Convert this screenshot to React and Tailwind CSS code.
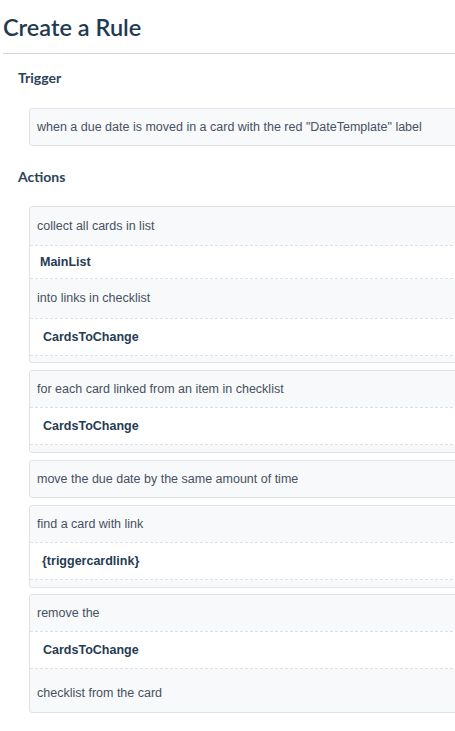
import React from "react";

const Text = ({ children, h = "h-[36px]", extra = "" }) => (
  <div className={`${h} flex items-center pl-[7px] text-[12.5px] text-[#465161] font-['Liberation_Sans',Arial,sans-serif] ${extra}`}>
    {children}
  </div>
);

const Value = ({ children, h = "h-[36px]", pl = "pl-[13px]" }) => (
  <div className={`${h} flex items-center ${pl} bg-white border-y border-dashed border-[#dde0e4] text-[12.5px] font-bold text-[#263c52] font-['Liberation_Sans',Arial,sans-serif]`}>
    {children}
  </div>
);

const Box = ({ children, className = "" }) => (
  <div className={`w-[450px] bg-[#f8f9fb] border border-[#dfe1e6] rounded-[3px] ${className}`}>
    {children}
  </div>
);

export default function App() {
  return (
    <div className="w-[455px] h-[731px] overflow-hidden bg-white font-['Lato',sans-serif]">
      <div className="ml-[3px] pt-[13px] pb-[11px] border-b border-[#d4d6d9]">
        <h1 className="text-[23.5px] leading-[29px] font-semibold text-[#1f3b53]">
          Create a Rule
        </h1>
      </div>
      <div className="pl-[18px] mt-[15px] text-[14px] leading-[17px] font-bold text-[#2d4358]">Trigger</div>
      <div className="pl-[29px] mt-[22px]">
        <Box>
          <Text h="h-[36px]">when a due date is moved in a card with the red "DateTemplate" label</Text>
        </Box>
      </div>
      <div className="pl-[18px] mt-[22px] text-[14px] leading-[17px] font-bold text-[#2d4358]">Actions</div>
      <div className="pl-[29px] mt-[21px] flex flex-col">
        <Box className="pb-[6px]">
          <Text h="h-[38px]">collect all cards in list</Text>
          <Value h="h-[34px]" pl="pl-[10px]">MainList</Value>
          <Text h="h-[39px]">into links in checklist</Text>
          <Value h="h-[38px]">CardsToChange</Value>
        </Box>
        <Box className="pb-[7px] mt-[7px]">
          <Text>for each card linked from an item in checklist</Text>
          <Value h="h-[38px]">CardsToChange</Value>
        </Box>
        <Box className="mt-[7px]">
          <Text>move the due date by the same amount of time</Text>
        </Box>
        <Box className="pb-[7px] mt-[7px]">
          <Text>find a card with link</Text>
          <Value h="h-[38px]" pl="pl-[12px]">{"{triggercardlink}"}</Value>
        </Box>
        <Box className="mt-[6px]">
          <Text>remove the</Text>
          <Value h="h-[38px]">CardsToChange</Value>
          <Text h="h-[43px]" extra="pt-[5px]">checklist from the card</Text>
        </Box>
      </div>
    </div>
  );
}
